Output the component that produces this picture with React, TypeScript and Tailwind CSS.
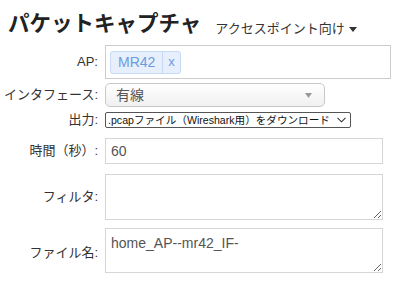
import React from 'react';

const font = { fontFamily: '"Liberation Sans", "Noto Sans CJK JP", sans-serif' };

function Label({ children, className = '' }: { children: React.ReactNode; className?: string }) {
  return (
    <div className={`w-[101px] shrink-0 pr-[3px] text-right text-[13px] whitespace-nowrap text-[#333] ${className}`}>{children}</div>
  );
}

export default function App() {
  return (
    <div className="w-[400px] h-[285px] bg-white overflow-hidden" style={font}>
      <div className="flex items-end h-[45px] pl-[8px] pb-[10px]">
        <h1 className="text-[21.5px] leading-none font-bold text-[#222]">パケットキャプチャ</h1>
        <div className="ml-[14px] flex items-center text-[13px] leading-none text-[#333]">
          アクセスポイント向け
          <svg width="8" height="5" viewBox="0 0 8 5" className="ml-[4px] mt-[2px]">
            <path d="M0 0h8L4 5z" fill="#333" />
          </svg>
        </div>
      </div>

      <div className="flex flex-col">
        <div className="flex items-center h-[34px]">
          <Label>AP:</Label>
          <div className="ml-[4px] w-[286px] h-[34px] border border-[#ccc] flex items-center pl-[4px]">
            <div className="flex h-[23px] items-stretch rounded-[3px] border border-[#c6d9f7] bg-[#e7effd] text-[14px] text-[#6b9be0]">
              <span className="flex items-center px-[7px]">MR42</span>
              <span className="flex items-center border-l border-[#c6d9f7] px-[5px] text-[13px]">x</span>
            </div>
          </div>
        </div>

        <div className="flex items-center h-[24px] mt-[4px]">
          <Label>インタフェース:</Label>
          <div className="ml-[4px] w-[220px] h-[24px] rounded-[5px] border border-[#c8c8c8] bg-gradient-to-b from-white to-[#f0f0f0] flex items-center justify-between pl-[10px] pr-[12px]">
            <span className="text-[14px] text-[#555]">有線</span>
            <svg width="7" height="5" viewBox="0 0 7 5">
              <path d="M0 0h7L3.5 5z" fill="#999" />
            </svg>
          </div>
        </div>

        <div className="flex items-center h-[16px] mt-[5px]">
          <Label>出力:</Label>
          <div className="ml-[4px] w-[246px] h-[16px] rounded-[2px] border border-[#555] flex items-center justify-between pl-[2px] pr-[4px]">
            <span className="text-[10.6px] leading-none text-[#111] whitespace-nowrap">.pcapファイル（Wireshark用）をダウンロード</span>
            <svg width="9" height="6" viewBox="0 0 9 6">
              <path d="M0.5 0.8L4.5 4.8L8.5 0.8" fill="none" stroke="#333" strokeWidth="1.1" />
            </svg>
          </div>
        </div>

        <div className="flex items-center h-[26px] mt-[10px]">
          <Label>時間（秒）:</Label>
          <div className="ml-[4px] w-[278px] h-[26px] border border-[#d6d6d6] flex items-center pl-[5px] text-[14px] text-[#555]">60</div>
        </div>

        <div className="flex items-center h-[46px] mt-[10px]">
          <Label>フィルタ:</Label>
          <textarea
            readOnly
            className="ml-[4px] w-[278px] h-[46px] border border-[#d6d6d6] outline-none px-[5px] py-[5px] text-[14px] text-[#555]"
            style={font}
            value=""
          />
        </div>

        <div className="flex items-center h-[45px] mt-[8px]">
          <Label className="mt-[5px]">ファイル名:</Label>
          <textarea
            readOnly
            className="ml-[4px] w-[278px] h-[45px] border border-[#d6d6d6] outline-none px-[5px] pt-[6px] text-[14px] leading-[16px] text-[#555]"
            style={font}
            value="home_AP--mr42_IF-"
          />
        </div>
      </div>
    </div>
  );
}
